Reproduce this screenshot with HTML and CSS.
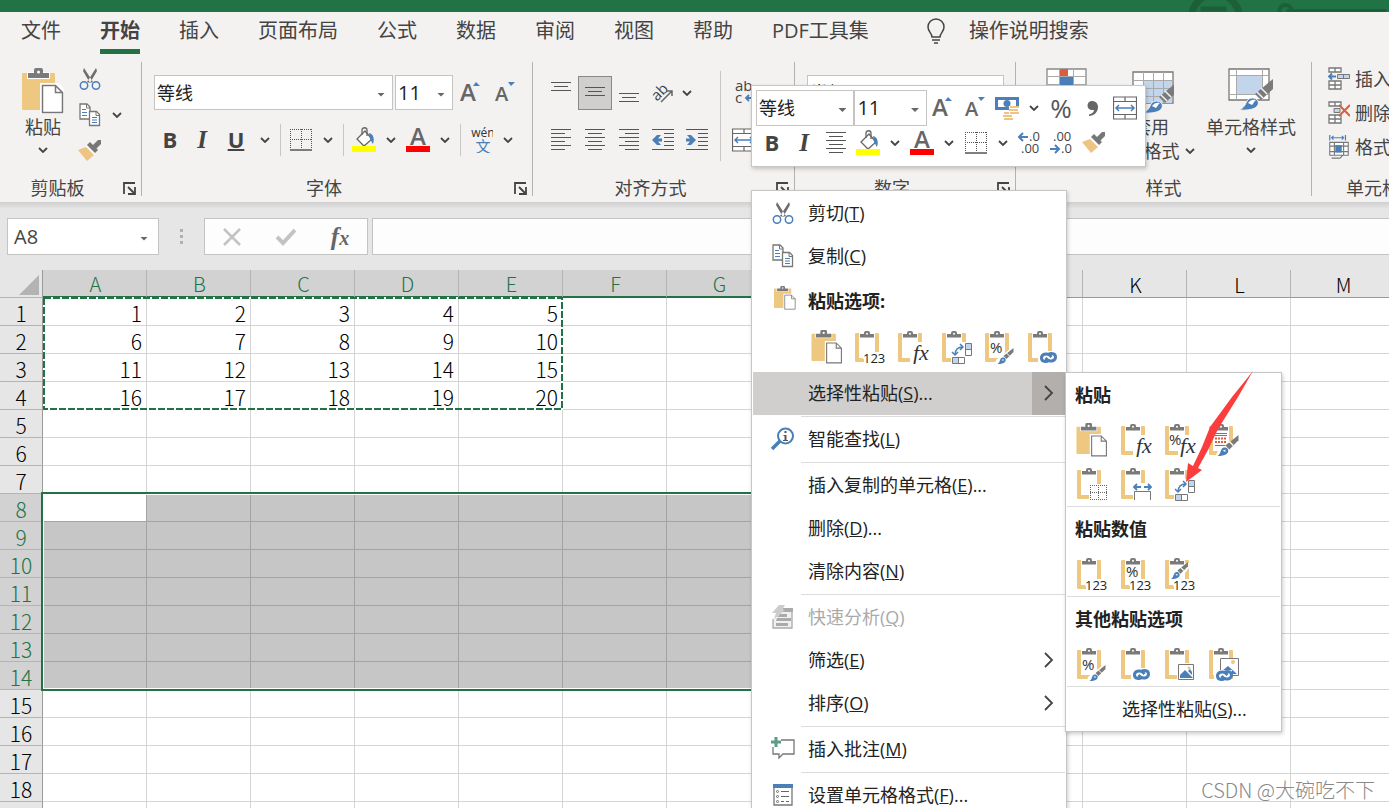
FILE: index.html
```html
<!DOCTYPE html>
<html lang="zh-CN">
<head>
<meta charset="utf-8">
<title>工作表</title>
<link rel="stylesheet" href="styles.css">
</head>
<body>
<svg class="defs" aria-hidden="true">
  <defs>
    <symbol id="chev" viewBox="0 0 10 6"><path d="M1 1l4 4 4-4" fill="none" stroke="#444" stroke-width="1.800"/></symbol>
    <symbol id="chev-r" viewBox="0 0 10 16"><path d="M1 1l7 7-7 7" fill="none" stroke="#444" stroke-width="1.800"/></symbol>
    <symbol id="launch" viewBox="0 0 13 13"><path d="M1 12V1h11M5 5l6 6M12 5v7H5" fill="none" stroke="#444" stroke-width="1.800"/></symbol>
    <symbol id="clip" viewBox="0 0 32 34">
      <path fill="#eec780" d="M2 3h22a1 1 0 0 1 1 1v28H2a1 1 0 0 1-1-1V4a1 1 0 0 1 1-1z"/>
      <path fill="#fff" d="M5 8h16v20H5zM5 2h16v6H5z"/>
      <path fill="#7a7a7a" d="M6 7.500V4h4V3a2 2 0 0 1 2-2h2a2 2 0 0 1 2 2v1h4v3.500z"/><circle cx="13" cy="3.800" r="1" fill="#fff"/>
    </symbol>
    <symbol id="brush" viewBox="0 0 16 16">
      <path fill="#7a7a7a" d="M16 0v4L9 11 6 8z"/><path d="M9 5l3 3" stroke="#fff" stroke-width="1"/>
      <path fill="#4a7fb8" d="M0 16c2-1 2-3 3-5 1-2 4-2 5 0 1 3-2 5-8 5z"/><path fill="#fff" d="M4 12l2-1 0 2z"/>
    </symbol>
    <symbol id="link" viewBox="0 0 18 11">
      <g fill="none" stroke="#4a7fb8" stroke-width="3"><path d="M9 8.500C7 10 2 10 2 6s5-5 8-3l2 2"/><path d="M9 2.500C11 1 16 1 16 5s-5 5-8 3L6 6"/></g>
    </symbol>
    <symbol id="p-paste" viewBox="2 1 42 46">
      <path fill="#eec780" d="M3 6h31a1 1 0 0 1 1 1v36H3a1 1 0 0 1-1-1V7a1 1 0 0 1 1-1z"/>
      <path fill="#fff" d="M7 5h23v7H7z"/>
      <path fill="#7a7a7a" d="M8 11V6h6V3a2 2 0 0 1 2-2h5a2 2 0 0 1 2 2v3h6v5z"/><circle cx="18.500" cy="5" r="1.500" fill="#fff"/>
      <path fill="#fff" d="M20 16h18l6 6v25H20z"/>
      <path fill="#fff" stroke="#777" stroke-width="1.500" d="M22.500 18.500h13l7 7v20h-20zM35.500 18.500v7h7"/>
    </symbol>
    <symbol id="p-123" viewBox="0 0 32 34"><use href="#clip"/><path fill="#fff" d="M9 22h23v12H10v-5H9z"/><text x="9" y="33" class="t123">123</text></symbol>
    <symbol id="p-fx" viewBox="0 0 32 34"><use href="#clip"/><path fill="#fff" d="M21 12h11v22H13v-6h5z"/><text x="16" y="30" class="tfx">fx</text></symbol>
    <symbol id="p-pfx" viewBox="0 0 32 34"><use href="#clip"/><path fill="#fff" d="M21 12h11v22H14v-6h5z"/><text x="5" y="22" class="tpct">%</text><text x="16" y="30" class="tfx">fx</text></symbol>
    <symbol id="p-trans" viewBox="0 0 32 34"><use href="#clip"/><path fill="#fff" d="M21 12h11v22H10v-7h11z"/>
      <path fill="#c3d5ea" d="M24 14h6v6h-6zM12 28h6v6h-6z"/>
      <path fill="none" stroke="#777" stroke-width="1" d="M24.500 13.500h6v12h-6zM24.500 19.500h6M11.500 27.500h12v6h-12zM17.500 27.500v6"/>
      <path fill="none" stroke="#4a7fb8" stroke-width="1.500" d="M14 25c0-5 2-8 8-8M19 14l3 3-3 3M11 22l3 3 3-3"/></symbol>
    <symbol id="p-pct" viewBox="0 0 32 34"><use href="#clip"/><text x="6" y="23" class="tpct">%</text><path fill="#fff" d="M31 15v19H11l1-4z"/><use href="#brush" x="13" y="18" width="17" height="16"/></symbol>
    <symbol id="p-link" viewBox="0 0 32 34"><use href="#clip"/><rect x="11" y="21" width="21" height="13" fill="#fff"/><use href="#link" x="12" y="22" width="19" height="11"/></symbol>
    <symbol id="p-src" viewBox="0 0 32 34"><use href="#clip"/>
      <path stroke="#4a7fb8" stroke-width="1" d="M7 10.500h12M7 12.500h12M7 22.500h12"/><path stroke="#d9603f" stroke-width="2" stroke-dasharray="2 1" d="M7 15.500h12M7 19h12"/>
      <path fill="#fff" d="M31 12v22H7l3-6z"/><use href="#brush" x="9" y="12" width="22" height="21"/></symbol>
    <symbol id="p-nob" viewBox="0 0 32 34"><use href="#clip"/><path fill="#fff" d="M13 17h19v17H13z"/><path fill="none" stroke="#666" stroke-dasharray="1 1" d="M14 18.500h17M14 25.500h17M14 32.500h17M14.500 18v15M22.500 18v15M30.500 18v15"/></symbol>
    <symbol id="p-width" viewBox="0 0 32 34"><use href="#clip"/><path fill="#fff" d="M13 16h19v18H13z"/><path fill="none" stroke="#777" d="M14.500 33v-8.500h16V33"/><path fill="none" stroke="#4a7fb8" stroke-width="1.800" d="M14 20h7M24 20h7M17 17l-3 3 3 3M28 17l3 3-3 3"/></symbol>
    <symbol id="p-p123" viewBox="0 0 32 34"><use href="#p-123"/><text x="6" y="20" class="tpct">%</text></symbol>
    <symbol id="p-b123" viewBox="0 0 32 34"><use href="#p-123"/><path fill="#fff" d="M21 6h4v5l-4 5z"/><use href="#brush" x="7" y="5" width="17" height="17"/></symbol>
    <symbol id="p-pic" viewBox="0 0 32 34"><use href="#clip"/><path fill="#fff" d="M13 16h18v18H13z"/><path fill="#fff" stroke="#777" d="M14.500 17.500h15v15h-15z"/><path fill="#4a7fb8" d="M16 31v-3l5-5 8 8z"/><path fill="#4a7fb8" d="M24 24l4 4v-3l-2-3z"/><circle cx="25" cy="21" r="1.500" fill="#eec780"/></symbol>
    <symbol id="p-piclink" viewBox="0 0 32 34"><use href="#clip"/><path fill="#fff" stroke="#777" d="M12.500 11.500h18v17h-18z"/><path fill="#4a7fb8" d="M14 24l6-5 9 8H14z"/><circle cx="25" cy="15" r="2" fill="#eec780"/><path fill="#fff" d="M6 23h18v11H6z"/><use href="#link" x="7" y="23" width="19" height="11"/></symbol>
    <symbol id="cut" viewBox="0 0 22 24"><path fill="#6e6e6e" d="M5 1l9 14-3 1L4 4zM17 1L8 15l3 1L18 4z"/><g fill="none" stroke="#4a7fb8" stroke-width="1.500"><circle cx="5" cy="18.500" r="3.700"/><circle cx="17" cy="18.500" r="3.700"/></g></symbol>
    <symbol id="copy" viewBox="0 0 22 24"><g fill="#fff" stroke="#777" stroke-width="1.300"><path d="M1 1h7l3 3v12H1z"/><path d="M10.500 8.500h7l3 3v11h-10z"/></g><path d="M7.500 1v4H11M17 8.500v4h3.500" fill="none" stroke="#777"/><path stroke="#4a7fb8" stroke-width="1.200" d="M3 6.500h4M3 9.500h5M3 12.500h5M13 14.500h5M13 17h5M13 19.500h5"/></symbol>
    <symbol id="painter" viewBox="0 0 24 22"><path fill="#eec383" d="M0 10l8-3 8 8-7 6z"/><path fill="#777" d="M9 5l3-3 8 8-3 3z"/><path fill="#777" d="M14 6l6-6 3 0 0 4-6 6z"/><path stroke="#fff" d="M8 6l9 9"/></symbol>
    <symbol id="bucket" viewBox="0 0 24 26"><path fill="#fff" stroke="#666" stroke-width="1.300" d="M5 12l8-8 7 8-8 7z"/><path fill="none" stroke="#666" stroke-width="1.300" d="M10 8V3c0-3 5-3 5 0v6"/><path fill="#4a7fb8" d="M17 6c4 1 6 5 4 11-1-1-2-4-3-5z"/><path fill="#ff0" d="M0 19h24v6H0z"/></symbol>
    <symbol id="fcolor" viewBox="0 0 24 26"><text x="12" y="18" class="ta" text-anchor="middle">A</text><path fill="#f00" d="M0 19h24v6H0z"/></symbol>
    <symbol id="grow" viewBox="0 0 22 24"><text x="0" y="20" class="ta">A</text><path fill="#4a7fb8" d="M13 5l3-4 4 4z"/></symbol>
    <symbol id="shrink" viewBox="0 0 22 24"><text x="1" y="20" class="ta ta-s">A</text><path fill="#4a7fb8" d="M14 1h7l-4 4z"/></symbol>
    <symbol id="borders" viewBox="0 0 22 22"><path fill="none" stroke="#555" stroke-dasharray="1 1" d="M0 .500h22M0 10.500h22M.500 0v20M11.500 0v20M21.500 0v20"/><path stroke="#555" stroke-width="1.500" d="M0 21h22"/></symbol>
    <symbol id="al-t" viewBox="0 0 22 24"><path stroke="#555" stroke-width="1.200" d="M1 1.500h20M4 5.500h14M1 9.500h20"/></symbol>
    <symbol id="al-m" viewBox="0 0 22 24"><path stroke="#555" stroke-width="1.200" d="M1 6.500h20M4 10.500h14M1 14.500h20"/></symbol>
    <symbol id="al-b" viewBox="0 0 22 24"><path stroke="#555" stroke-width="1.200" d="M1 12.500h20M4 16.500h14M1 20.500h20"/></symbol>
    <symbol id="al-l" viewBox="0 0 22 24"><path stroke="#555" stroke-width="1.200" d="M1 1.500h20M1 5.500h14M1 9.500h20M1 13.500h14M1 17.500h20M1 21.500h14"/></symbol>
    <symbol id="al-c" viewBox="0 0 22 24"><path stroke="#555" stroke-width="1.200" d="M1 1.500h20M4 5.500h14M1 9.500h20M4 13.500h14M1 17.500h20M4 21.500h14"/></symbol>
    <symbol id="al-r" viewBox="0 0 22 24"><path stroke="#555" stroke-width="1.200" d="M1 1.500h20M7 5.500h14M1 9.500h20M7 13.500h14M1 17.500h20M7 21.500h14"/></symbol>
    <symbol id="ind-l" viewBox="0 0 24 24"><path stroke="#555" stroke-width="1.200" d="M1 1.500h22M13 5.500h10M13 9.500h10M13 13.500h10M13 17.500h10M1 21.500h22"/><path fill="#4a7fb8" d="M1 12l5-5h4l-3 3.500h4v3H7l3 3.500H6z"/></symbol>
    <symbol id="ind-r" viewBox="0 0 24 24"><path stroke="#555" stroke-width="1.200" d="M1 1.500h22M13 5.500h10M13 9.500h10M13 13.500h10M13 17.500h10M1 21.500h22"/><path fill="#4a7fb8" d="M11 12L6 7H2l3 3.500H1v3h4L2 17h4z"/></symbol>
    <symbol id="orient" viewBox="0 0 22 22"><text x="0" y="16" class="tic" transform="rotate(-45 7 12)">ab</text><path fill="none" stroke="#666" stroke-width="1.500" d="M9 20L20 9M15 9h5v5"/></symbol>
    <symbol id="wrap" viewBox="0 0 24 24"><text x="3" y="10" class="tic">ab</text><text x="3" y="22" class="tic">c</text><path fill="none" stroke="#4a7fb8" stroke-width="1.800" d="M21 14v3h-7M17 14l-3 3 3 3"/></symbol>
    <symbol id="merge" viewBox="0 0 24 24"><path fill="#fff" stroke="#666" stroke-width="1.200" d="M.500 1h23v22H.500zM.500 5.500h23M.500 18.500h23M12 1v4.500M12 18.500V23"/><path fill="none" stroke="#4a7fb8" stroke-width="1.500" d="M3 12h18M6 9l-3 3 3 3M18 9l3 3-3 3"/></symbol>
    <symbol id="wen" viewBox="0 0 24 26"><text x="14" y="10" class="twen" text-anchor="middle">wén</text><text x="14" y="25" class="twz" text-anchor="middle">文</text></symbol>
    <symbol id="money" viewBox="0 0 24 24"><path fill="#4a7fb8" d="M0 1h24v13H0z"/><path fill="#fff" d="M3 4h18v7H3z"/><path fill="#4a7fb8" d="M0 1h5v3H3v2H0zM24 1h-5v3h2v2h3zM0 14h5v-3H3V9H0z"/><circle cx="12" cy="7.500" r="3.500" fill="#4a7fb8"/><path fill="#fff" d="M8 15h6v-5h10v14H8z"/><path stroke="#eec383" stroke-width="2" d="M15 11h9M14 14h9M15 17h9M9 17h5M8 20h9M9 23h9"/></symbol>
    <symbol id="dec-up" viewBox="0 0 24 24"><text x="11" y="10" class="tdec">.0</text><text x="3" y="22" class="tdec">.00</text><path fill="none" stroke="#4a7fb8" stroke-width="2" d="M1 6h9M5 2L1 6l4 4"/></symbol>
    <symbol id="dec-dn" viewBox="0 0 24 24"><text x="3" y="10" class="tdec">.00</text><text x="11" y="22" class="tdec">.0</text><path fill="none" stroke="#4a7fb8" stroke-width="2" d="M0 18h9M5 14l4 4-4 4"/></symbol>
    <symbol id="bigbrush" viewBox="0 0 34 34"><path fill="#7a7a7a" d="M34 2v10L22 23l-6-6z"/><path stroke="#f3f2f1" stroke-width="1.500" d="M22 11l6 6M18 15l6 6"/><path fill="#4a7fb8" stroke="#f3f2f1" d="M0 33c5-2 6-5 8-9 2-4 9-4 11 0 2 6-5 10-19 9z"/><path fill="#fff" d="M9 26c2-3 5-4 8-3-2 1-2 3-4 5z"/></symbol>
    <symbol id="cond" viewBox="0 0 44 46"><path fill="#fff" stroke="#888" stroke-width="1.300" d="M2 1h39v40H2z"/><path stroke="#aaa" d="M2 8.500h39M2 16.500h39M14.500 1v40M28.500 1v40"/><path fill="#d9603f" d="M15 1h8v7h-8z"/><path fill="#4a7fb8" d="M15 9h13v8H15z"/></symbol>
    <symbol id="tfmt" viewBox="0 0 46 46"><path fill="#fff" stroke="#777" stroke-width="1.300" d="M5 4h40v31H5z"/><path fill="#c3d5ea" d="M15 12h29v23H15z"/><path stroke="#aaa" d="M5 12.500h40M5 20.500h40M5 28.500h40M15.500 4v31M25.500 4v31M35.500 4v31"/><use href="#bigbrush" x="15" y="12" width="34" height="34"/></symbol>
    <symbol id="cstyle" viewBox="0 0 46 46"><path fill="#fff" stroke="#777" stroke-width="1.300" d="M1 1h40v31H1z"/><path stroke="#aaa" d="M1 7.500h40M1 26.500h40M8.500 1v31M34.500 1v31"/><path fill="#c3d5ea" d="M9 8h25v18H9z"/><use href="#bigbrush" x="11" y="9" width="34" height="34"/></symbol>
    <symbol id="c-ins" viewBox="0 0 22 24"><path fill="#fff" stroke="#777" stroke-width="1.300" d="M1 1h12v4H1zM7 1v4M1 14h12v8H1zM1 18h12M7 14v8"/><path fill="#c3d5ea" stroke="#777" d="M9.500 7.500h12v4h-12zM15.500 7.500v4"/><path fill="none" stroke="#4a7fb8" stroke-width="1.800" d="M8 9.500H1M4 6.500l-3 3 3 3"/></symbol>
    <symbol id="c-del" viewBox="0 0 22 24"><path fill="#fff" stroke="#777" stroke-width="1.300" d="M1 1h12v4H1zM7 1v4M1 14h12v8H1zM1 18h12M7 14v8"/><path fill="#c3d5ea" stroke="#777" d="M6 7.500h6v4H6z"/><path stroke="#d9603f" stroke-width="2" d="M11 4l11 11M22 4L11 15"/></symbol>
    <symbol id="c-fmt" viewBox="0 0 22 26"><path fill="none" stroke="#4a7fb8" stroke-width="1.300" d="M1 0v6M18 0v6M3 3h13M5 1L3 3l2 2M14 1l2 2-2 2"/><path fill="#fff" stroke="#777" stroke-width="1.200" d="M1 8h20v14H1zM1 12h20M1 18h20M6 8v14M16 8v14M3 25h9l3-3"/><path fill="#4a7fb8" d="M7 11h7v8H7z"/></symbol>
    <symbol id="find" viewBox="0 0 24 24"><circle cx="14.500" cy="9" r="7.500" fill="#fff" stroke="#4a7fb8" stroke-width="2"/><path stroke="#4a7fb8" stroke-width="3.500" d="M9 14l-8 8"/><path stroke="#555" stroke-width="2" d="M14.500 4v2M14.500 8v6"/><path stroke="#555" d="M12.500 8.500h2M12 13.500h5"/></symbol>
    <symbol id="quick" viewBox="0 0 22 24"><path fill="#f3eef3" stroke="#aaa" stroke-width="1.300" d="M1 14v9h19V4H12"/><path fill="#aaa" d="M11 3h10v4H10zM8 9h7v3H5zM5 13h14v3H4zM4 18h12v3H4z"/><path fill="#ccc" d="M7 0h6l-3 5h3L2 14l2-6H0z"/></symbol>
    <symbol id="comment" viewBox="0 0 24 24"><path fill="#fff" stroke="#777" stroke-width="1.300" d="M10 3h13v14H12l-4 4v-4H2v-7"/><path stroke="#5a9e85" stroke-width="3" d="M5 0v10M0 5h10"/></symbol>
    <symbol id="fmt" viewBox="0 0 22 24"><path fill="#fff" stroke="#777" stroke-width="1.300" d="M2 2h18v20H2z"/><path fill="#4a7fb8" d="M1 1h20v4H1z"/><path stroke="#666" d="M9 8.500h8M9 13.500h8M9 18.500h3M14 18.500h3"/><g fill="none" stroke="#666"><circle cx="5.500" cy="8.500" r="1"/><circle cx="5.500" cy="13.500" r="1"/><circle cx="5.500" cy="18.500" r="1"/></g></symbol>
    <symbol id="bulb" viewBox="0 0 18 26"><path fill="none" stroke="#444" stroke-width="1.500" d="M5 19c0-4-4-5-4-10a8 8 0 0 1 16 0c0 5-4 6-4 10zM5 22h8M7 25h4"/></symbol>
    <symbol id="no" viewBox="0 0 18 18"><path stroke="#c3c3c3" stroke-width="2.500" d="M1 1l16 16M17 1L1 17"/></symbol>
    <symbol id="yes" viewBox="0 0 20 18"><path fill="none" stroke="#c3c3c3" stroke-width="4" d="M1 9l6 6L19 2"/></symbol>
  </defs>
</svg>

<header class="titlebar"><svg class="deco" viewBox="0 0 200 12"><g fill="none" stroke="#1c6039"><circle cx="29" cy="18" r="24" stroke-width="7"/><path d="M14 9h26" stroke-width="5"/><path d="M100 11h100" stroke-width="4"/><circle cx="99" cy="11" r="6" stroke-width="4"/></g></svg></header>

<nav class="tabs">
  <button class="tab">文件</button>
  <button class="tab tab-on">开始</button>
  <button class="tab">插入</button>
  <button class="tab">页面布局</button>
  <button class="tab">公式</button>
  <button class="tab">数据</button>
  <button class="tab">审阅</button>
  <button class="tab">视图</button>
  <button class="tab">帮助</button>
  <button class="tab">PDF工具集</button>
  <button class="tab tell"><svg class="i-bulb"><use href="#bulb"/></svg>操作说明搜索</button>
</nav>

<section class="ribbon">
  <div class="group g-clip">
    <div class="gbody">
      <button class="big big-paste"><svg class="i-big"><use href="#p-paste"/></svg><span>粘贴</span><svg class="i-chev"><use href="#chev"/></svg></button>
      <div class="stack">
        <button class="ib" aria-label="剪切"><svg class="i-22"><use href="#cut"/></svg></button>
        <div class="row"><button class="ib" aria-label="复制"><svg class="i-22"><use href="#copy"/></svg></button><button class="cv" aria-label="更多"><svg class="i-chev"><use href="#chev"/></svg></button></div>
        <button class="ib" aria-label="格式刷"><svg class="i-24"><use href="#painter"/></svg></button>
      </div>
    </div>
    <footer class="gfoot"><span>剪贴板</span><button class="lb" aria-label="剪贴板设置"><svg class="i-launch"><use href="#launch"/></svg></button></footer>
  </div>

  <div class="group g-font">
    <div class="gcol">
      <div class="row row-sel">
        <label class="pick pick-font"><select aria-label="字体"><option>等线</option></select></label>
        <label class="pick pick-size"><select aria-label="字号"><option>11</option></select></label>
        <button class="ib" aria-label="增大字号"><svg class="i-22"><use href="#grow"/></svg></button>
        <button class="ib" aria-label="减小字号"><svg class="i-22"><use href="#shrink"/></svg></button>
      </div>
      <div class="row">
        <button class="ib b">B</button><button class="ib it">I</button><button class="ib b un">U</button><button class="cv" aria-label="更多"><svg class="i-chev"><use href="#chev"/></svg></button>
        <i class="sep"></i>
        <button class="ib" aria-label="边框"><svg class="i-22b"><use href="#borders"/></svg></button><button class="cv" aria-label="更多"><svg class="i-chev"><use href="#chev"/></svg></button>
        <i class="sep"></i>
        <button class="ib" aria-label="填充颜色"><svg class="i-26"><use href="#bucket"/></svg></button><button class="cv" aria-label="更多"><svg class="i-chev"><use href="#chev"/></svg></button>
        <button class="ib" aria-label="字体颜色"><svg class="i-26"><use href="#fcolor"/></svg></button><button class="cv" aria-label="更多"><svg class="i-chev"><use href="#chev"/></svg></button>
        <i class="sep"></i>
        <button class="ib" aria-label="拼音"><svg class="i-26"><use href="#wen"/></svg></button><button class="cv" aria-label="更多"><svg class="i-chev"><use href="#chev"/></svg></button>
      </div>
    </div>
    <footer class="gfoot"><span>字体</span><button class="lb" aria-label="字体设置"><svg class="i-launch"><use href="#launch"/></svg></button></footer>
  </div>

  <div class="group g-align">
    <div class="gbody">
      <div class="gcol">
        <div class="row row-al">
          <button class="ib" aria-label="顶端对齐"><svg class="i-22"><use href="#al-t"/></svg></button><button class="ib on" aria-label="垂直居中"><svg class="i-22"><use href="#al-m"/></svg></button><button class="ib" aria-label="底端对齐"><svg class="i-22"><use href="#al-b"/></svg></button><button class="ib" aria-label="方向"><svg class="i-22b"><use href="#orient"/></svg></button><button class="cv cv-s" aria-label="更多"><svg class="i-chev"><use href="#chev"/></svg></button>
        </div>
        <div class="row">
          <button class="ib" aria-label="左对齐"><svg class="i-22"><use href="#al-l"/></svg></button><button class="ib" aria-label="居中"><svg class="i-22"><use href="#al-c"/></svg></button><button class="ib" aria-label="右对齐"><svg class="i-22"><use href="#al-r"/></svg></button><button class="ib" aria-label="减少缩进"><svg class="i-24b"><use href="#ind-l"/></svg></button><button class="ib" aria-label="增加缩进"><svg class="i-24b"><use href="#ind-r"/></svg></button>
        </div>
      </div>
      <i class="sep sep-tall"></i>
      <div class="gcol">
        <div class="row row-al"><button class="ib" aria-label="自动换行"><svg class="i-24b"><use href="#wrap"/></svg></button></div>
        <div class="row"><button class="ib" aria-label="合并后居中"><svg class="i-24b"><use href="#merge"/></svg></button></div>
      </div>
    </div>
    <footer class="gfoot"><span>对齐方式</span><button class="lb" aria-label="对齐设置"><svg class="i-launch"><use href="#launch"/></svg></button></footer>
  </div>

  <div class="group g-num">
    <div class="gcol"><div class="row row-sel"><label class="pick pick-num"><select aria-label="数字格式"><option>常规</option></select></label></div></div>
    <footer class="gfoot"><span>数字</span><button class="lb" aria-label="数字设置"><svg class="i-launch"><use href="#launch"/></svg></button></footer>
  </div>

  <div class="group g-style">
    <div class="gbody">
      <button class="big b1" aria-label="条件格式"><svg class="i-big"><use href="#cond"/></svg></button>
      <button class="big b2"><svg class="i-big"><use href="#tfmt"/></svg><span>套用</span><span class="line2">表格格式<svg class="i-chev"><use href="#chev"/></svg></span></button>
      <button class="big b3"><svg class="i-big"><use href="#cstyle"/></svg><span>单元格样式</span><svg class="i-chev"><use href="#chev"/></svg></button>
    </div>
    <footer class="gfoot"><span>样式</span></footer>
  </div>

  <div class="group g-cells">
    <div class="gcol">
      <button class="wide"><svg class="i-22"><use href="#c-ins"/></svg>插入</button>
      <button class="wide"><svg class="i-22"><use href="#c-del"/></svg>删除</button>
      <button class="wide"><svg class="i-22"><use href="#c-fmt"/></svg>格式</button>
    </div>
    <footer class="gfoot"><span>单元格</span></footer>
  </div>
</section>

<section class="fbar">
  <label class="pick namebox"><input type="text" value="A8" aria-label="名称框"></label>
  <span class="dots"><i></i><i></i><i></i></span>
  <div class="fbtns"><button aria-label="取消"><svg class="i-18"><use href="#no"/></svg></button><button aria-label="输入"><svg class="i-18"><use href="#yes"/></svg></button><button class="fx">f<small>x</small></button></div>
  <input class="finput" type="text" aria-label="编辑栏">
</section>

<main class="sheet">
<table class="grid">
<thead><tr><th class="corner"><svg class="i-corner" viewBox="0 0 20 20"><path fill="#b3b3b3" d="M20 0v20H0z"/></svg></th><th class="s">A</th><th class="s">B</th><th class="s">C</th><th class="s">D</th><th class="s">E</th><th class="s">F</th><th class="s">G</th><th>H</th><th>I</th><th>J</th><th>K</th><th>L</th><th>M</th></tr></thead>
<tbody>
<tr><th>1</th><td>1</td><td>2</td><td>3</td><td>4</td><td>5</td><td></td><td></td><td></td><td></td><td></td><td></td><td></td><td></td></tr>
<tr><th>2</th><td>6</td><td>7</td><td>8</td><td>9</td><td>10</td><td></td><td></td><td></td><td></td><td></td><td></td><td></td><td></td></tr>
<tr><th>3</th><td>11</td><td>12</td><td>13</td><td>14</td><td>15</td><td></td><td></td><td></td><td></td><td></td><td></td><td></td><td></td></tr>
<tr><th>4</th><td>16</td><td>17</td><td>18</td><td>19</td><td>20</td><td></td><td></td><td></td><td></td><td></td><td></td><td></td><td></td></tr>
<tr><th>5</th><td></td><td></td><td></td><td></td><td></td><td></td><td></td><td></td><td></td><td></td><td></td><td></td><td></td></tr>
<tr><th>6</th><td></td><td></td><td></td><td></td><td></td><td></td><td></td><td></td><td></td><td></td><td></td><td></td><td></td></tr>
<tr><th>7</th><td></td><td></td><td></td><td></td><td></td><td></td><td></td><td></td><td></td><td></td><td></td><td></td><td></td></tr>
<tr class="sr"><th>8</th><td class="cur"></td><td></td><td></td><td></td><td></td><td></td><td></td><td></td><td></td><td></td><td></td><td></td><td></td></tr>
<tr class="sr"><th>9</th><td></td><td></td><td></td><td></td><td></td><td></td><td></td><td></td><td></td><td></td><td></td><td></td><td></td></tr>
<tr class="sr"><th>10</th><td></td><td></td><td></td><td></td><td></td><td></td><td></td><td></td><td></td><td></td><td></td><td></td><td></td></tr>
<tr class="sr"><th>11</th><td></td><td></td><td></td><td></td><td></td><td></td><td></td><td></td><td></td><td></td><td></td><td></td><td></td></tr>
<tr class="sr"><th>12</th><td></td><td></td><td></td><td></td><td></td><td></td><td></td><td></td><td></td><td></td><td></td><td></td><td></td></tr>
<tr class="sr"><th>13</th><td></td><td></td><td></td><td></td><td></td><td></td><td></td><td></td><td></td><td></td><td></td><td></td><td></td></tr>
<tr class="sr"><th>14</th><td></td><td></td><td></td><td></td><td></td><td></td><td></td><td></td><td></td><td></td><td></td><td></td><td></td></tr>
<tr><th>15</th><td></td><td></td><td></td><td></td><td></td><td></td><td></td><td></td><td></td><td></td><td></td><td></td><td></td></tr>
<tr><th>16</th><td></td><td></td><td></td><td></td><td></td><td></td><td></td><td></td><td></td><td></td><td></td><td></td><td></td></tr>
<tr><th>17</th><td></td><td></td><td></td><td></td><td></td><td></td><td></td><td></td><td></td><td></td><td></td><td></td><td></td></tr>
<tr><th>18</th><td></td><td></td><td></td><td></td><td></td><td></td><td></td><td></td><td></td><td></td><td></td><td></td><td></td></tr>
<tr><th></th><td></td><td></td><td></td><td></td><td></td><td></td><td></td><td></td><td></td><td></td><td></td><td></td><td></td></tr>
</tbody>
</table>
<svg class="ants"><rect class="ants-base" x="1" y="1" width="518" height="111"/><rect class="ants-line" x="1" y="1" width="518" height="111"/></svg>
<div class="selbox"></div>
</main>

<section class="mini">
  <div class="row row-mini">
    <label class="pick m-font"><select aria-label="字体"><option>等线</option></select></label><label class="pick m-size"><select aria-label="字号"><option>11</option></select></label><button class="ib" aria-label="增大字号"><svg class="i-22"><use href="#grow"/></svg></button><button class="ib" aria-label="减小字号"><svg class="i-22"><use href="#shrink"/></svg></button><button class="ib" aria-label="会计格式"><svg class="i-24b"><use href="#money"/></svg></button><button class="cv" aria-label="更多"><svg class="i-chev"><use href="#chev"/></svg></button><button class="ib pct">%</button><button class="ib" aria-label="千位分隔"><svg class="i-comma" viewBox="0 0 12 16"><path fill="#666" d="M5 1a4.500 4.500 0 0 0 0 9h2c0 2-2 4-5 4.500V16c5 0 9-4 9-9 0-4-3-6-6-6z"/></svg></button><button class="ib" aria-label="合并后居中"><svg class="i-24b"><use href="#merge"/></svg></button>
  </div>
  <div class="row">
    <button class="ib b">B</button><button class="ib it">I</button><button class="ib" aria-label="居中"><svg class="i-22"><use href="#al-c"/></svg></button><button class="ib" aria-label="填充颜色"><svg class="i-26"><use href="#bucket"/></svg></button><button class="cv" aria-label="更多"><svg class="i-chev"><use href="#chev"/></svg></button><button class="ib" aria-label="字体颜色"><svg class="i-26"><use href="#fcolor"/></svg></button><button class="cv" aria-label="更多"><svg class="i-chev"><use href="#chev"/></svg></button><button class="ib" aria-label="边框"><svg class="i-22b"><use href="#borders"/></svg></button><button class="cv" aria-label="更多"><svg class="i-chev"><use href="#chev"/></svg></button><button class="ib" aria-label="增加小数位数"><svg class="i-24b"><use href="#dec-up"/></svg></button><button class="ib" aria-label="减少小数位数"><svg class="i-24b"><use href="#dec-dn"/></svg></button><button class="ib" aria-label="格式刷"><svg class="i-24"><use href="#painter"/></svg></button>
  </div>
</section>

<section class="menu">
  <button class="item"><span class="ic"><svg class="i-22"><use href="#cut"/></svg></span><span>剪切(<u>T</u>)</span></button>
  <button class="item"><span class="ic"><svg class="i-22"><use href="#copy"/></svg></span><span>复制(<u>C</u>)</span></button>
  <div class="item head"><span class="ic"><svg class="i-22"><use href="#p-paste"/></svg></span><strong>粘贴选项:</strong></div>
  <div class="opts">
    <button aria-label="粘贴"><svg class="i-p"><use href="#p-paste"/></svg></button><button aria-label="值"><svg class="i-p"><use href="#p-123"/></svg></button><button aria-label="公式"><svg class="i-p"><use href="#p-fx"/></svg></button><button aria-label="转置"><svg class="i-p"><use href="#p-trans"/></svg></button><button aria-label="格式"><svg class="i-p"><use href="#p-pct"/></svg></button><button aria-label="粘贴链接"><svg class="i-p"><use href="#p-link"/></svg></button>
  </div>
  <button class="item hot"><span class="ic"></span><span>选择性粘贴(<u>S</u>)...</span><span class="arr"><svg class="i-cr"><use href="#chev-r"/></svg></span></button>
  <hr>
  <button class="item"><span class="ic"><svg class="i-24b"><use href="#find"/></svg></span><span>智能查找(<u>L</u>)</span></button>
  <hr>
  <button class="item"><span class="ic"></span><span>插入复制的单元格(<u>E</u>)...</span></button>
  <button class="item"><span class="ic"></span><span>删除(<u>D</u>)...</span></button>
  <button class="item"><span class="ic"></span><span>清除内容(<u>N</u>)</span></button>
  <hr>
  <button class="item" disabled><span class="ic"><svg class="i-22"><use href="#quick"/></svg></span><span>快速分析(<u>Q</u>)</span></button>
  <button class="item"><span class="ic"></span><span>筛选(<u>E</u>)</span><span class="arr"><svg class="i-cr"><use href="#chev-r"/></svg></span></button>
  <button class="item"><span class="ic"></span><span>排序(<u>O</u>)</span><span class="arr"><svg class="i-cr"><use href="#chev-r"/></svg></span></button>
  <hr>
  <button class="item"><span class="ic"><svg class="i-24b"><use href="#comment"/></svg></span><span>插入批注(<u>M</u>)</span></button>
  <hr>
  <button class="item"><span class="ic"><svg class="i-22"><use href="#fmt"/></svg></span><span>设置单元格格式(<u>F</u>)...</span></button>
</section>

<section class="sub">
  <h3>粘贴</h3>
  <div class="opts">
    <button aria-label="粘贴"><svg class="i-p"><use href="#p-paste"/></svg></button><button aria-label="公式"><svg class="i-p"><use href="#p-fx"/></svg></button><button aria-label="公式和数字格式"><svg class="i-p"><use href="#p-pfx"/></svg></button><button aria-label="保留源格式"><svg class="i-p"><use href="#p-src"/></svg></button>
    <button aria-label="无边框"><svg class="i-p"><use href="#p-nob"/></svg></button><button aria-label="保留源列宽"><svg class="i-p"><use href="#p-width"/></svg></button><button aria-label="转置"><svg class="i-p"><use href="#p-trans"/></svg></button>
  </div>
  <div class="line"></div>
  <h3>粘贴数值</h3>
  <div class="opts"><button aria-label="值"><svg class="i-p"><use href="#p-123"/></svg></button><button aria-label="值和数字格式"><svg class="i-p"><use href="#p-p123"/></svg></button><button aria-label="值和源格式"><svg class="i-p"><use href="#p-b123"/></svg></button></div>
  <div class="line"></div>
  <h3>其他粘贴选项</h3>
  <div class="opts"><button aria-label="格式"><svg class="i-p"><use href="#p-pct"/></svg></button><button aria-label="粘贴链接"><svg class="i-p"><use href="#p-link"/></svg></button><button aria-label="图片"><svg class="i-p"><use href="#p-pic"/></svg></button><button aria-label="链接的图片"><svg class="i-p"><use href="#p-piclink"/></svg></button></div>
  <div class="line"></div>
  <button class="more">选择性粘贴(<u>S</u>)...</button>
</section>

<svg class="pointer" viewBox="0 0 70 114"><path fill="#fb3d3d" d="M1 112L3 93l5 3 9-19 8-20 22-30L68 1 53 27 33 59 23 80 13 98l4 2z"/></svg>
<div class="mark">CSDN @大碗吃不下</div>
</body>
</html>
```
FILE: styles.css
```css
:root {
  --green: #217346;
  --line: #d4d4d4;
  --ui: "Open Sans", "Noto Sans CJK SC", sans-serif;
}
* { box-sizing: border-box; }
html { height: 100%; }
body {
  position: relative;
  height: 100%;
  margin: 0;
  overflow: hidden;
  display: flex;
  flex-direction: column;
  background: #fff;
  color: #444;
  font: 18px/24px var(--ui);
}
button, input, select {
  margin: 0;
  padding: 0;
  border: 0;
  border-radius: 0;
  background: none;
  color: inherit;
  font: inherit;
}
svg { display: block; flex: none; overflow: visible; }
.defs { position: absolute; width: 0; height: 0; }
.row { display: flex; align-items: center; height: 32px; }

/* icon sizes */
.i-chev { width: 10px; height: 6px; }
.i-cr { width: 10px; height: 16px; }
.i-launch { width: 13px; height: 13px; }
.i-comma { width: 12px; height: 16px; }
.i-18 { width: 20px; height: 18px; }
.i-22 { width: 22px; height: 24px; }
.i-22b { width: 22px; height: 22px; }
.i-24 { width: 24px; height: 22px; }
.i-24b { width: 24px; height: 24px; }
.i-26 { width: 24px; height: 26px; }
.i-p { width: 32px; height: 34px; }
.i-big { width: 46px; height: 46px; }
.i-bulb { width: 18px; height: 26px; }
.i-corner { width: 20px; height: 20px; }

/* text inside icons */
.t123 { font: 13px "Open Sans", sans-serif; fill: #222; }
.tfx { font: italic 22px "Liberation Serif", serif; fill: #333; }
.tpct { font: 15px "Open Sans", sans-serif; fill: #333; }
.ta { font: 600 24px "Open Sans", sans-serif; fill: #666; }
.ta-s { font-size: 20px; }
.tic { font: 15px "Open Sans", sans-serif; fill: #444; }
.twen { font: 12px "Open Sans", sans-serif; fill: #333; }
.twz { font: 15px "Noto Sans CJK SC", sans-serif; fill: #4a7fb8; }
.tdec { font: 13px "Open Sans", sans-serif; fill: #444; }

.titlebar { display: flex; justify-content: flex-end; flex: none; height: 12px; background: var(--green); overflow: hidden; }
.deco { width: 205px; height: 12px; }

.tabs { display: flex; flex: none; gap: 39px; height: 44px; padding-left: 21px; background: #f3f2f1; white-space: nowrap; }
.tab { height: 42px; border-bottom: 5px solid transparent; font-size: 20px; }
.tab-on { border-color: var(--green); font-weight: 700; }
.tell { display: flex; align-items: center; gap: 24px; margin-left: 19px; }

.ribbon { display: flex; flex: none; padding: 6px 0; background: #f3f2f1; overflow: hidden; white-space: nowrap; }
.group { display: flex; flex-direction: column; flex: none; height: 134px; border-right: 1px solid #b4b2b0; }
.gbody, .gcol { display: flex; flex: 1; }
.gcol { flex-direction: column; }
.gbody > .gcol { flex: none; }
.gfoot { display: flex; align-items: center; height: 16px; line-height: 16px; }
.gfoot span { flex: 1; text-align: center; }
.lb { display: flex; width: 26px; padding-left: 8px; align-items: center; height: 16px; }
.g-clip { width: 142px; }
.g-font { width: 391px; }
.g-font .gcol { padding-left: 12px; }
.g-align { width: 262px; }
.g-align .gbody { padding-left: 11px; }
.g-align .ib { width: 34px; }
.g-num { width: 221px; }
.g-num .gcol { padding-left: 12px; }
.g-style { width: 296px; }
.g-style .gbody { padding-left: 12px; }
.g-cells { width: 122px; border: 0; }
.g-cells .gcol { padding-left: 16px; }

.ib, .cv { display: flex; align-items: center; justify-content: center; flex: none; }
.ib { width: 32px; height: 34px; }
.cv { width: 22px; height: 32px; }
.cv-s { width: 14px; }
.b { padding-bottom: 3px; font-weight: 700; font-size: 22px; }
.un { width: 36px; text-decoration: underline; text-decoration-thickness: 2px; }
.it { font: italic 700 25px "Liberation Serif", serif; }
.on { border: 1px solid #888; background: #d0cfce; }
.sep { width: 1px; height: 32px; margin: 0 4px; background: #c8c6c4; }
.sep-tall { height: 90px; margin: 9px 6px; }
.row-sel { height: 35px; margin: 13px 0 14px; gap: 2px; }
.row-al { height: 34px; margin: 14px 0; }

.big { display: flex; flex-direction: column; align-items: center; padding-top: 6px; }
.big .i-big { margin-bottom: 1px; }
.big .i-chev { margin-top: 8px; }
.big-paste { width: 74px; padding-left: 12px; }
.big .line2 { display: flex; align-items: center; gap: 5px; }
.big .line2 .i-chev { margin-top: 0; }
.b1 { width: 78px; }
.b2 { width: 90px; }
.b3 { width: 110px; }
.stack { display: flex; flex-direction: column; gap: 2px; }
.stack .row { height: 34px; }
.wide { display: flex; align-items: center; gap: 5px; height: 34px; }

.pick { position: relative; display: flex; border: 1px solid #c6c4c2; background: #fff; }
.pick select, .pick input { flex: 1; width: 100%; padding-left: 2px; appearance: none; color: #222; }
.pick::after { content: ""; position: absolute; right: 7px; top: 50%; width: 8px; height: 4px; background: #666; clip-path: polygon(0 0, 100% 0, 50% 100%); pointer-events: none; }
.pick-font { width: 239px; height: 35px; }
.pick-size { width: 58px; height: 35px; }
.pick-num { width: 197px; height: 35px; }
.pick-size select, .m-size select { font-size: 20px; }

.fbar { display: flex; flex: none; padding: 16px 0 15px; background: linear-gradient(#cfcfcf, #e6e6e6 7px); }
.fbar .namebox { width: 152px; height: 37px; margin-left: 7px; }
.fbar .namebox input { padding-left: 6px; font-size: 20px; color: #444; }
.fbar .namebox::after { right: 10px; }
.dots { display: flex; flex-direction: column; justify-content: center; gap: 3px; width: 45px; align-items: center; }
.dots i { width: 3px; height: 3px; background: #b0b0b0; }
.fbtns { display: flex; align-items: center; width: 164px; height: 37px; border: 1px solid #c6c4c2; background: #fdfdfd; }
.fbtns button { display: flex; flex: 1; justify-content: center; align-items: center; }
.fbtns .fx { align-items: baseline; font: italic 700 25px "Liberation Serif", serif; color: #666; }
.fx small { font-size: 20px; }
.finput { flex: 1; height: 37px; margin-left: 4px; border: 1px solid #c6c4c2; border-right: 0; background: #fdfdfd; }

.sheet { position: relative; flex: 1; overflow: hidden; background: #fff; }
.grid { width: 1395px; table-layout: fixed; border-spacing: 0; font: 300 21px/26px "Noto Sans CJK SC", sans-serif; color: #000; }
.grid th, .grid td { width: 104px; height: 28px; padding: 0 4px; border: solid var(--line); border-width: 0 1px 1px 0; text-align: right; line-height: 20px; }
.grid th { padding: 2px 0 0; background: #e6e6e6; border-color: #b4b4b4; font-weight: 300; text-align: center; }
.grid td { padding-top: 2px; }
.grid thead th { padding-left: 2px; font-size: 20px; border-bottom-color: #999; }
.grid th:first-child { width: 43px; border-right-color: #999; }
.grid thead th:first-child { border-bottom-color: #b4b4b4; padding-left: 0; }
.grid .corner .i-corner { margin-left: 19px; }
.grid thead .s { background: #d2d2d2; color: var(--green); border-bottom: 2px solid var(--green); }
.grid .sr th { background: #d2d2d2; color: var(--green); }
.grid .sr td:nth-child(-n+8) { background: #c6c6c6; border-color: #a3a3a3; }
.grid .sr td.cur:nth-child(2) { background: #fff; }
.ants { position: absolute; left: 43px; top: 27px; width: 520px; height: 113px; }
.ants rect { fill: none; stroke-width: 2; }
.ants-base { stroke: #fff; }
.ants-line { stroke: var(--green); stroke-dasharray: 7 2; }
.selbox { position: absolute; left: 41px; top: 222px; width: 731px; height: 199px; border: 2px solid var(--green); box-shadow: inset 0 0 0 1px #fff; }

.mini, .menu, .sub { position: absolute; background: #fff; border: 1px solid #c6c6c6; box-shadow: 1px 2px 4px rgba(0, 0, 0, .2); color: #222; }
.mini { left: 751px; top: 85px; width: 395px; padding: 4px 4px 7px; color: #444; }
.row-mini { height: 36px; margin-bottom: 1px; }
.m-font { width: 99px; height: 36px; }
.m-size { width: 73px; height: 36px; }
.pct { font-size: 26px; color: #555; }

.menu { left: 751px; top: 190px; width: 316px; padding: 1px; }
.item { display: flex; align-items: center; width: 100%; height: 43px; text-align: left; }
.item > span { padding-bottom: 2px; }
.item:disabled { color: #aaa; }
.ic { display: flex; justify-content: center; width: 55px; padding-left: 5px; }
.arr { display: flex; align-items: center; justify-content: center; width: 33px; height: 43px; margin-left: auto; }
.item.head { height: 46px; }
.item.head .ic { padding-bottom: 6px; padding-left: 8px; }
.hot { background: #d0cfce; }
.hot .arr { background: #b3afac; }
.menu hr { height: 1px; margin: 1px 0 1px 48px; border: 0; background: #dcdcdc; }
.opts { display: flex; flex-wrap: wrap; }
.opts button { display: flex; align-items: center; justify-content: center; width: 44px; height: 44px; }
.menu .opts { height: 48px; padding-left: 52px; padding-bottom: 2px; align-items: center; flex-wrap: nowrap; }

.sub { left: 1065px; top: 372px; width: 217px; }
.sub h3 { margin: 0; padding-left: 9px; font-size: 18px; line-height: 45px; }
.sub .opts { padding-left: 4px; }
.sub .line { height: 1px; margin: 0 1px; background: #dcdcdc; }
.more { display: block; padding-left: 56px; line-height: 44px; }

.pointer { position: absolute; left: 1185px; top: 370px; width: 70px; height: 114px; }
.mark { position: absolute; right: 14px; bottom: 5px; font: 300 20px/26px "Noto Sans CJK SC", sans-serif; color: #888; text-shadow: 0 0 2px #fff; }
```
